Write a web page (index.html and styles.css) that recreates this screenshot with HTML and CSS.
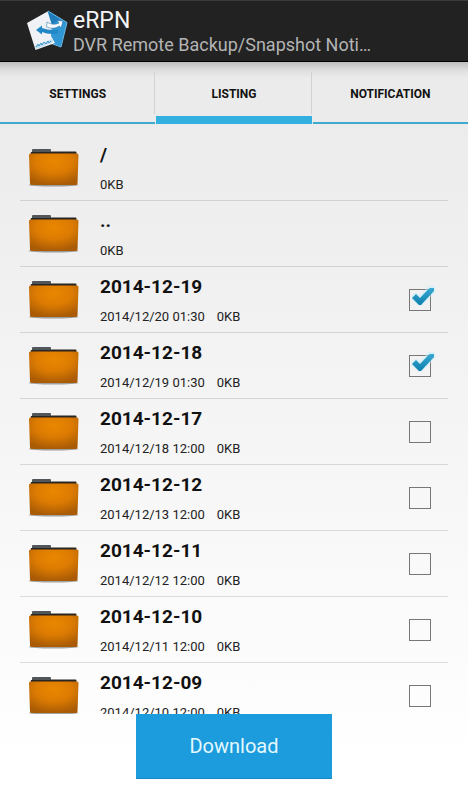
FILE: index.html
```html
<!DOCTYPE html>
<html lang="en">
<head>
  <meta charset="UTF-8">
  <meta name="viewport" content="width=device-width, initial-scale=1">
  <title>eRPN</title>
  <link rel="stylesheet" href="styles.css">
</head>
<body>
  <svg class="defs" aria-hidden="true">
    <defs>
      <radialGradient id="orange" cx="50%" cy="25%" r="75%">
        <stop offset="0" stop-color="#ea8700"/>
        <stop offset="0.5" stop-color="#dc7b02"/>
        <stop offset="1" stop-color="#a95b05"/>
      </radialGradient>
      <linearGradient id="tick" x1="0" y1="0" x2="0" y2="1">
        <stop offset="0" stop-color="#37a9d2"/>
        <stop offset="1" stop-color="#0f7fae"/>
      </linearGradient>
      <symbol id="folder" viewBox="0 0 52 40">
        <ellipse cx="25.500" cy="37" rx="25" ry="1.500" fill="#000" opacity="0.35"/>
        <path d="M4 5V2q0-1 1-1H22q1 0 1 1v4H4z" fill="#50565a"/>
        <path d="M3 4H22.500l1-0.500H47.500q1 0 1 1V7H2.500z" fill="#2b2521"/>
        <path d="M2.500 5.500H49q1.500 0 1.500 1.500L49.500 35.500q0 1.500-1.500 1.500H3.500q-1.500 0-1.500-1.500L1 7q0-1.500 1.500-1.500z" fill="url(#orange)"/>
      </symbol>
      <symbol id="check" viewBox="0 0 26 26">
        <path d="M6 12.500l4 3.500L21 5" fill="none" stroke="#c4eefb" stroke-width="9" stroke-linejoin="round" stroke-linecap="round" opacity="0.5"/>
        <path d="M2 13L6 9l4 4L18.500 4 20 3h4v3L11 20H9z" fill="url(#tick)"/>
      </symbol>
    </defs>
  </svg>

  <div class="app">
    <header class="header">
      <svg class="logo" viewBox="0 0 44 44" aria-hidden="true">
        <path d="M24 2L43 13.500 37 38 26 34z" fill="#3096d4" stroke="#6db9e6" stroke-width="1"/>
        <path d="M24 2.500l17 11-9-1-5 4z" fill="#1f7dbc"/>
        <path d="M3 14L23.500 2.500 28 16 27 27l4 7L11.500 41z" fill="#eff1f4"/>
        <path d="M23 13q6 4 12 1l-2-2.500 6 0.500-2 7-1.500-2q-6 4-13 1z" fill="#f6f8fa" stroke="#1d6da8" stroke-width="0.500"/>
        <path d="M12 21l6-4.500v2.500q8 3 16 1.500v4q-9 1.500-16-1.500v2.500z" fill="#2187c7"/>
        <path d="M11 37l17-7 1 3-17 7z" fill="#bcdcee"/>
        <path d="M12 38l2-3 1 2 2-3 1 2 2-3 2 2 2-3 1 2 2-2" fill="none" stroke="#3f97cd" stroke-width="1"/>
      </svg>
      <div class="titles">
        <h1 class="title">eRPN</h1>
        <p class="subtitle">DVR Remote Backup/Snapshot Noti…</p>
      </div>
    </header>

    <nav class="tabs">
      <button class="tab" type="button">SETTINGS</button>
      <button class="tab active" type="button" aria-current="page">LISTING</button>
      <button class="tab" type="button">NOTIFICATION</button>
    </nav>

    <ul class="list">
      <li class="row">
        <svg class="folder"><use href="#folder"/></svg>
        <div class="info">
          <span class="name">/</span>
          <span class="meta"><span>0KB</span></span>
        </div>
      </li>
      <li class="row">
        <svg class="folder"><use href="#folder"/></svg>
        <div class="info">
          <span class="name">..</span>
          <span class="meta"><span>0KB</span></span>
        </div>
      </li>
      <li class="row">
        <svg class="folder"><use href="#folder"/></svg>
        <label class="info" for="d1219">
          <span class="name">2014-12-19</span>
          <span class="meta"><span>2014/12/20 01:30</span><span>0KB</span></span>
        </label>
        <span class="check"><input type="checkbox" id="d1219" checked><svg class="tick"><use href="#check"/></svg></span>
      </li>
      <li class="row">
        <svg class="folder"><use href="#folder"/></svg>
        <label class="info" for="d1218">
          <span class="name">2014-12-18</span>
          <span class="meta"><span>2014/12/19 01:30</span><span>0KB</span></span>
        </label>
        <span class="check"><input type="checkbox" id="d1218" checked><svg class="tick"><use href="#check"/></svg></span>
      </li>
      <li class="row">
        <svg class="folder"><use href="#folder"/></svg>
        <label class="info" for="d1217">
          <span class="name">2014-12-17</span>
          <span class="meta"><span>2014/12/18 12:00</span><span>0KB</span></span>
        </label>
        <span class="check"><input type="checkbox" id="d1217"><svg class="tick"><use href="#check"/></svg></span>
      </li>
      <li class="row">
        <svg class="folder"><use href="#folder"/></svg>
        <label class="info" for="d1212">
          <span class="name">2014-12-12</span>
          <span class="meta"><span>2014/12/13 12:00</span><span>0KB</span></span>
        </label>
        <span class="check"><input type="checkbox" id="d1212"><svg class="tick"><use href="#check"/></svg></span>
      </li>
      <li class="row">
        <svg class="folder"><use href="#folder"/></svg>
        <label class="info" for="d1211">
          <span class="name">2014-12-11</span>
          <span class="meta"><span>2014/12/12 12:00</span><span>0KB</span></span>
        </label>
        <span class="check"><input type="checkbox" id="d1211"><svg class="tick"><use href="#check"/></svg></span>
      </li>
      <li class="row">
        <svg class="folder"><use href="#folder"/></svg>
        <label class="info" for="d1210">
          <span class="name">2014-12-10</span>
          <span class="meta"><span>2014/12/11 12:00</span><span>0KB</span></span>
        </label>
        <span class="check"><input type="checkbox" id="d1210"><svg class="tick"><use href="#check"/></svg></span>
      </li>
      <li class="row">
        <svg class="folder"><use href="#folder"/></svg>
        <label class="info" for="d1209">
          <span class="name">2014-12-09</span>
          <span class="meta"><span>2014/12/10 12:00</span><span>0KB</span></span>
        </label>
        <span class="check"><input type="checkbox" id="d1209"><svg class="tick"><use href="#check"/></svg></span>
      </li>
    </ul>

    <footer class="footer">
      <button class="download" type="button">Download</button>
    </footer>
  </div>
</body>
</html>
```
FILE: styles.css
```css
* {
  box-sizing: border-box;
}
body {
  margin: 0;
  font-family: Roboto, "Noto Sans", sans-serif;
  color: #111;
}
.defs {
  position: absolute;
  width: 0;
  height: 0;
}
.app {
  display: flex;
  flex-direction: column;
  height: 100vh;
  background: linear-gradient(#e9e9e9, #eeeeee 25%, #ffffff 95%);
}

/* action bar */
.header {
  display: flex;
  align-items: center;
  gap: 5px;
  padding: 8px 24px 4px;
  background: #222;
  border-top: 1px solid #3a3c3c;
  border-bottom: 1px solid #000;
}
.logo {
  width: 44px;
  height: 44px;
  align-self: flex-start;
}
.titles {
  flex: 1;
  min-width: 0;
}
.title {
  margin: 0;
  font-size: 23px;
  font-weight: 400;
  line-height: 24px;
  color: #f5f5f5;
}
.subtitle {
  margin: 0;
  font-size: 18px;
  line-height: 24px;
  color: #b4b4b4;
  white-space: nowrap;
  overflow: hidden;
  text-overflow: ellipsis;
}

/* tabs */
.tabs {
  display: flex;
  gap: 1px;
  padding-bottom: 1px;
  background: linear-gradient(#bdbdbd, #dedede 8px, #ebebeb 16px);
}
.tab {
  flex: 1;
  height: 62px;
  padding: 0;
  border: none;
  border-bottom: 2px solid #3fa9d0;
  background: linear-gradient(#d2d2d2, #d2d2d2) right 10px / 1px 42px no-repeat;
  font: bold 12px/64px Roboto, "Noto Sans", sans-serif;
  color: #111;
  cursor: pointer;
}
.tab:last-child {
  background: none;
}
.tab.active {
  border-bottom: 8px solid #33b0e0;
}

/* file list */
.list {
  flex: 1;
  min-height: 0;
  margin: 0;
  padding: 10px 20px 0;
  list-style: none;
  overflow: hidden;
}
.row {
  display: flex;
  align-items: center;
  gap: 20px;
  height: 66px;
  padding: 0 17px 0 8px;
  border-bottom: 1px solid rgba(0, 0, 0, 0.12);
}
.folder {
  width: 52px;
  height: 40px;
}
.info {
  flex: 1;
  display: flex;
  flex-direction: column;
  gap: 10px;
}
.name {
  font-size: 19px;
  font-weight: bold;
  line-height: 24px;
}
.meta {
  display: flex;
  gap: 12px;
  font-size: 13px;
  line-height: 16px;
  color: #222;
}
.check {
  position: relative;
  display: flex;
}
.check input {
  appearance: none;
  width: 22px;
  height: 22px;
  margin: 0;
  border: 1px solid #777;
}
.tick {
  display: none;
  position: absolute;
  left: 1px;
  top: -4px;
  width: 26px;
  height: 26px;
  pointer-events: none;
}
.check input:checked + .tick {
  display: block;
}

.footer {
  display: flex;
  justify-content: center;
  padding-bottom: 21px;
}
.download {
  padding: 20px 53px;
  border: none;
  border-bottom: 1px solid #1787c4;
  background: #1c9cdc;
  font: 20px/24px Roboto, "Noto Sans", sans-serif;
  color: #e4f8ff;
  cursor: pointer;
}
```
